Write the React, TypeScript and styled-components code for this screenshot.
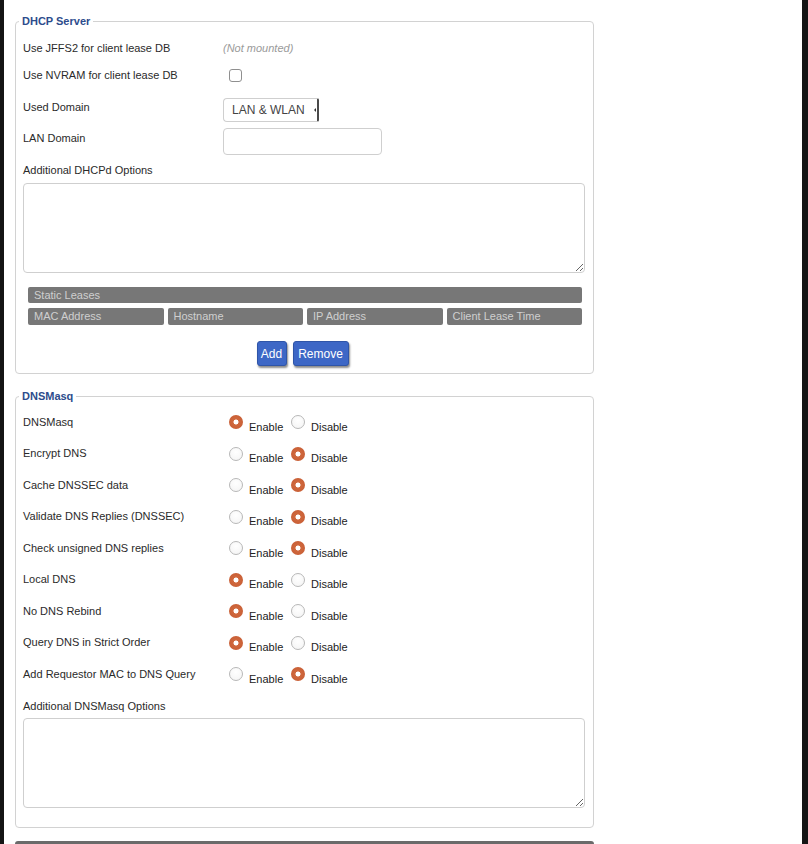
import React from "react";
import styled, { createGlobalStyle } from "styled-components";

const Global = createGlobalStyle`
  html, body { margin: 0; padding: 0; background: #141414; }
  body { font-family: "Liberation Sans", Arial, sans-serif; font-size: 11px; color: #2a2a2a; }
  #root { margin: 0 6px 0 4px; background: #fff; min-height: 844px; overflow: hidden; }
`;

const Page = styled.div`
  padding: 14px 0 0 11px;
  width: 579px;
`;

const Fieldset = styled.fieldset<{ $pt: number; $pb: number; $mb: number }>`
  margin: 0 0 ${(p) => p.$mb}px 0;
  padding: ${(p) => p.$pt}px 8px ${(p) => p.$pb}px 7px;
  border: 1px solid #d2d2d2;
  border-radius: 4px;
  min-width: 0;
  box-sizing: border-box;
  width: 579px;
`;

const Legend = styled.legend`
  font-weight: bold;
  font-size: 11px;
  line-height: 14px;
  color: #2d4c8c;
  padding: 0 3px;
  margin-left: -4px;
`;

const Row = styled.div<{ $h: number; $mt: number; $align?: string }>`
  display: flex;
  align-items: ${(p) => p.$align || "center"};
  height: ${(p) => p.$h}px;
  margin-top: ${(p) => p.$mt}px;
`;

const Label = styled.div<{ $pt?: number }>`
  width: 200px;
  flex: none;
  line-height: 14px;
  padding-top: ${(p) => p.$pt || 0}px;
`;

const BlockLabel = styled.div<{ $mt: number }>`
  line-height: 14px;
  margin-top: ${(p) => p.$mt}px;
`;

const Muted = styled.span`
  font-style: italic;
  color: #9a9a9a;
  line-height: 14px;
`;

const Check = styled.input`
  appearance: none;
  width: 13px;
  height: 13px;
  margin: 0 0 0 6px;
  border: 1px solid #8f8f8f;
  border-radius: 3px;
  background: #fff;
  box-sizing: border-box;
`;

const SelectBox = styled.div`
  position: relative;
  width: 96px;
  height: 24px;
  box-sizing: border-box;
  border: 1px solid #cfcfcf;
  border-right: 2px solid #4a4a4a;
  border-radius: 4px 2px 2px 4px;
  font-size: 12px;
  color: #444;
  line-height: 22px;
  padding-left: 8px;
  background: #fff;
`;

const Arrow = styled.span`
  position: absolute;
  right: 1px;
  top: 9px;
  width: 0;
  height: 0;
  border-top: 2px solid transparent;
  border-bottom: 2px solid transparent;
  border-right: 2px solid #333;
`;

const TextInput = styled.input`
  width: 159px;
  height: 27px;
  box-sizing: border-box;
  border: 1px solid #cfcfcf;
  border-radius: 4px;
  margin: 0;
  padding: 0 6px;
  font-family: inherit;
`;

const TextArea = styled.textarea<{ $mt: number }>`
  display: block;
  width: 100%;
  height: 90px;
  box-sizing: border-box;
  margin: ${(p) => p.$mt}px 0 0 0;
  border: 1px solid #cfcfcf;
  border-radius: 4px;
  font-family: inherit;
`;

const Leases = styled.div`
  margin: 14px 3px 0 5px;
  display: grid;
  grid-template-columns: repeat(4, 1fr);
  column-gap: 4px;
  row-gap: 5px;
`;

const LeaseHead = styled.div<{ $span?: boolean; $h: number }>`
  grid-column: ${(p) => (p.$span ? "1 / -1" : "auto")};
  height: ${(p) => p.$h}px;
  line-height: ${(p) => p.$h}px;
  background: #777777;
  color: #cfcfcf;
  border-radius: 2px;
  padding-left: 6px;
  font-size: 11px;
`;

const Buttons = styled.div`
  display: flex;
  justify-content: center;
  gap: 6px;
  margin: 16px 3px 0 0;
`;

const Button = styled.button<{ $w: number }>`
  width: ${(p) => p.$w}px;
  height: 25px;
  padding: 0;
  border: 1px solid #2f55a8;
  border-radius: 3px;
  background: #3d67c6;
  color: #fff;
  font-family: inherit;
  font-size: 12px;
  box-shadow: 1px 2px 2px rgba(0, 0, 0, 0.45);
`;

const RadioGroup = styled.div`
  display: flex;
  align-items: center;
`;

const Radio = styled.span<{ $on: boolean }>`
  width: 14px;
  height: 14px;
  box-sizing: border-box;
  border-radius: 50%;
  flex: none;
  margin-top: 1px;
  border: ${(p) => (p.$on ? "none" : "1px solid #b8b8b8")};
  background: ${(p) =>
    p.$on
      ? "radial-gradient(circle, #fff 0 2.2px, #d0683d 2.8px, #c45a32 100%)"
      : "radial-gradient(circle at 50% 35%, #fff, #f3f3f3)"};
`;

const RadioText = styled.span<{ $w: number }>`
  margin-left: 6px;
  width: ${(p) => p.$w}px;
  line-height: 14px;
  padding-top: 10px;
  color: #222;
`;

const RadioRow = styled.div`
  display: flex;
  align-items: center;
  height: 31.5px;
`;

const Controls = styled.div`
  display: flex;
  align-items: center;
  padding-left: 6px;
`;

const BottomBar = styled.div`
  height: 20px;
  background: #6a6a6a;
  border-radius: 3px 3px 0 0;
`;

const dns: [string, boolean][] = [
  ["DNSMasq", true],
  ["Encrypt DNS", false],
  ["Cache DNSSEC data", false],
  ["Validate DNS Replies (DNSSEC)", false],
  ["Check unsigned DNS replies", false],
  ["Local DNS", true],
  ["No DNS Rebind", true],
  ["Query DNS in Strict Order", true],
  ["Add Requestor MAC to DNS Query", false],
];

export default function App() {
  return (
    <>
      <Global />
      <Page>
        <Fieldset $pt={10} $pb={7} $mb={15}>
          <Legend>DHCP Server</Legend>
          <Row $h={20} $mt={0}>
            <Label>Use JFFS2 for client lease DB</Label>
            <Muted>(Not mounted)</Muted>
          </Row>
          <Row $h={20} $mt={7}>
            <Label>Use NVRAM for client lease DB</Label>
            <Check type="checkbox" />
          </Row>
          <Row $h={24} $mt={13} $align="flex-start">
            <Label $pt={2}>Used Domain</Label>
            <SelectBox>
              LAN &amp; WLAN
              <Arrow />
            </SelectBox>
          </Row>
          <Row $h={27} $mt={6} $align="flex-start">
            <Label $pt={3}>LAN Domain</Label>
            <TextInput type="text" />
          </Row>
          <BlockLabel $mt={8}>Additional DHCPd Options</BlockLabel>
          <TextArea $mt={6} />
          <Leases>
            <LeaseHead $span $h={16}>Static Leases</LeaseHead>
            <LeaseHead $h={17}>MAC Address</LeaseHead>
            <LeaseHead $h={17}>Hostname</LeaseHead>
            <LeaseHead $h={17}>IP Address</LeaseHead>
            <LeaseHead $h={17}>Client Lease Time</LeaseHead>
          </Leases>
          <Buttons>
            <Button $w={30}>Add</Button>
            <Button $w={56}>Remove</Button>
          </Buttons>
        </Fieldset>
        <Fieldset $pt={3} $pb={19} $mb={13}>
          <Legend>DNSMasq</Legend>
          {dns.map(([name, on]) => (
            <RadioRow key={name}>
              <Label>{name}</Label>
              <Controls>
                <RadioGroup>
                  <Radio $on={on} />
                  <RadioText $w={42}>Enable</RadioText>
                </RadioGroup>
                <RadioGroup>
                  <Radio $on={!on} />
                  <RadioText $w={40}>Disable</RadioText>
                </RadioGroup>
              </Controls>
            </RadioRow>
          ))}
          <BlockLabel $mt={9}>Additional DNSMasq Options</BlockLabel>
          <TextArea $mt={5} />
        </Fieldset>
        <BottomBar />
      </Page>
    </>
  );
}
